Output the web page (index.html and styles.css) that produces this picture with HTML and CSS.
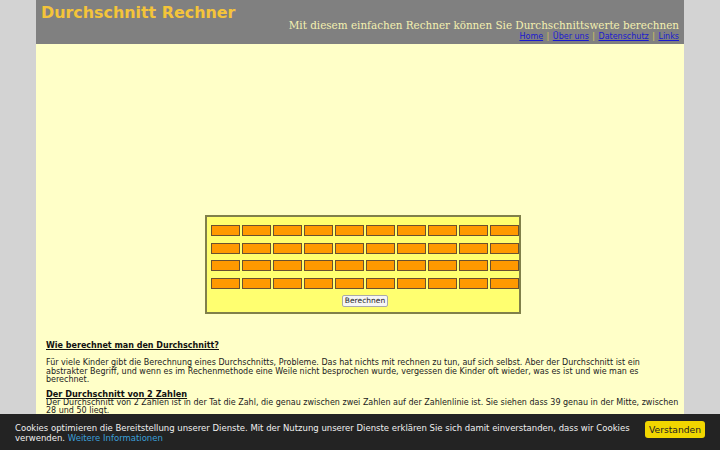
FILE: index.html
```html
<!DOCTYPE html>
<html lang="de">
<head>
<meta charset="utf-8">
<title>Durchschnitt Rechner</title>
<link rel="stylesheet" href="styles.css">
</head>
<body>
<div class="page">
  <header class="header">
    <div class="logo">Durchschnitt Rechner</div>
    <div class="header-right">
      <div class="slogan">Mit diesem einfachen Rechner können Sie Durchschnittswerte berechnen</div>
      <nav class="nav"><a href="#">Home</a><span class="sep">|</span><a href="#">Über uns</a><span class="sep">|</span><a href="#">Datenschutz</a><span class="sep">|</span><a href="#">Links</a></nav>
    </div>
  </header>
  <main class="content">
    <div class="ad"></div>
    <div class="calc">
      <div class="grid">
        <input><input><input><input><input><input><input><input><input><input>
        <input><input><input><input><input><input><input><input><input><input>
        <input><input><input><input><input><input><input><input><input><input>
        <input><input><input><input><input><input><input><input><input><input>
      </div>
      <div class="btn-row"><button class="btn">Berechnen</button></div>
    </div>
    <article class="text">
      <h2 class="h-main">Wie berechnet man den Durchschnitt?</h2>
      <p>Für viele Kinder gibt die Berechnung eines Durchschnitts, Probleme. Das hat nichts mit rechnen zu tun, auf sich selbst. Aber der Durchschnitt ist ein abstrakter Begriff, und wenn es im Rechenmethode eine Weile nicht besprochen wurde, vergessen die Kinder oft wieder, was es ist und wie man es berechnet.</p>
      <h3 class="h-sub">Der Durchschnitt von 2 Zahlen</h3>
      <p>Der Durchschnitt von 2 Zahlen ist in der Tat die Zahl, die genau zwischen zwei Zahlen auf der Zahlenlinie ist. Sie siehen dass 39 genau in der Mitte, zwischen 28 und 50 liegt.</p>
      <p>Um den Durchschnitt von zwei Zahlen zu berechnen, addieren Sie die beiden Zahlen und teilen das Ergebnis durch 2.</p>
    </article>
  </main>
</div>
<div class="cookie">
  <div class="cookie-text">Cookies optimieren die Bereitstellung unserer Dienste. Mit der Nutzung unserer Dienste erklären Sie sich damit einverstanden, dass wir Cookies verwenden. <a href="#">Weitere Informationen</a></div>
  <button class="cookie-btn">Verstanden</button>
</div>
</body>
</html>
```
FILE: styles.css
```css
html, body {
  margin: 0;
  padding: 0;
}
body {
  background: #d3d3d3;
  font-family: "DejaVu Sans", sans-serif;
  color: #222;
}
.page {
  width: 648px;
  margin: 0 auto;
  background: #ffffc8;
  min-height: 450px;
}
.header {
  background: #808080;
  height: 44px;
  display: flex;
  justify-content: space-between;
  padding: 0 5px 0 5px;
  box-sizing: border-box;
}
.logo {
  color: #f4c43a;
  font-weight: bold;
  font-size: 15.9px;
  line-height: 18px;
  padding-top: 4px;
}
.header-right {
  display: flex;
  flex-direction: column;
  align-items: flex-end;
  padding-top: 19px;
}
.slogan {
  font-family: "DejaVu Serif", serif;
  color: #f4f0b0;
  font-size: 10.4px;
  line-height: 13px;
}
.nav {
  font-size: 8px;
  line-height: 9px;
}
.nav a {
  color: #1a1ad0;
}
.sep {
  color: #d8c860;
  margin: 0 3.5px;
}
.content {
  padding: 0 4px 0 10px;
}
.ad {
  height: 171px;
}
.calc {
  width: 316px;
  height: 99px;
  margin: 0 0 0 159px;
  background: #ffff70;
  border: 2px solid #80804a;
  padding: 8px 0 0 4px;
  box-sizing: border-box;
}
.grid {
  display: grid;
  grid-template-columns: repeat(10, 29px);
  column-gap: 2px;
  row-gap: 6.5px;
}
.grid input {
  width: 29px;
  height: 11px;
  box-sizing: border-box;
  background: #ff9900;
  border: 1px solid #6a5030;
  padding: 0;
  margin: 0;
}
.btn-row {
  display: flex;
  justify-content: center;
  padding-top: 6px;
}
.btn {
  font-family: "DejaVu Sans", sans-serif;
  font-size: 7.5px;
  height: 12px;
  padding: 0 2px;
  background: #f6f6f6;
  border: 1px solid #aaa;
  border-radius: 2px;
  color: #222;
  line-height: 10px;
}
.text {
  padding-top: 25.5px;
  font-size: 8px;
  line-height: 8.5px;
}
.h-main {
  font-size: 8px;
  font-weight: bold;
  text-decoration: underline;
  margin: 0 0 8.5px 0;
  line-height: 11px;
  color: #111;
}
.text p {
  margin: 0 0 5px 0;
}
.h-sub {
  font-size: 8.2px;
  font-weight: bold;
  text-decoration: underline;
  margin: 0;
  line-height: 9px;
  color: #111;
}
.cookie {
  position: fixed;
  left: 0;
  right: 0;
  bottom: 0;
  height: 36px;
  background: #232323;
  display: flex;
  align-items: flex-start;
  justify-content: space-between;
  padding: 0 15px;
  box-sizing: border-box;
}
.cookie-text {
  color: #f0f0f0;
  font-size: 8.5px;
  line-height: 10px;
  width: 630px;
  padding-top: 9px;
}
.cookie-text a {
  color: #3b9fd8;
  text-decoration: none;
}
.cookie-btn {
  margin-top: 7px;
  background: #f1d600;
  border: none;
  border-radius: 3px;
  font-family: "DejaVu Sans", sans-serif;
  font-size: 9.2px;
  color: #222;
  width: 60px;
  height: 17px;
  padding: 0;
}
```
